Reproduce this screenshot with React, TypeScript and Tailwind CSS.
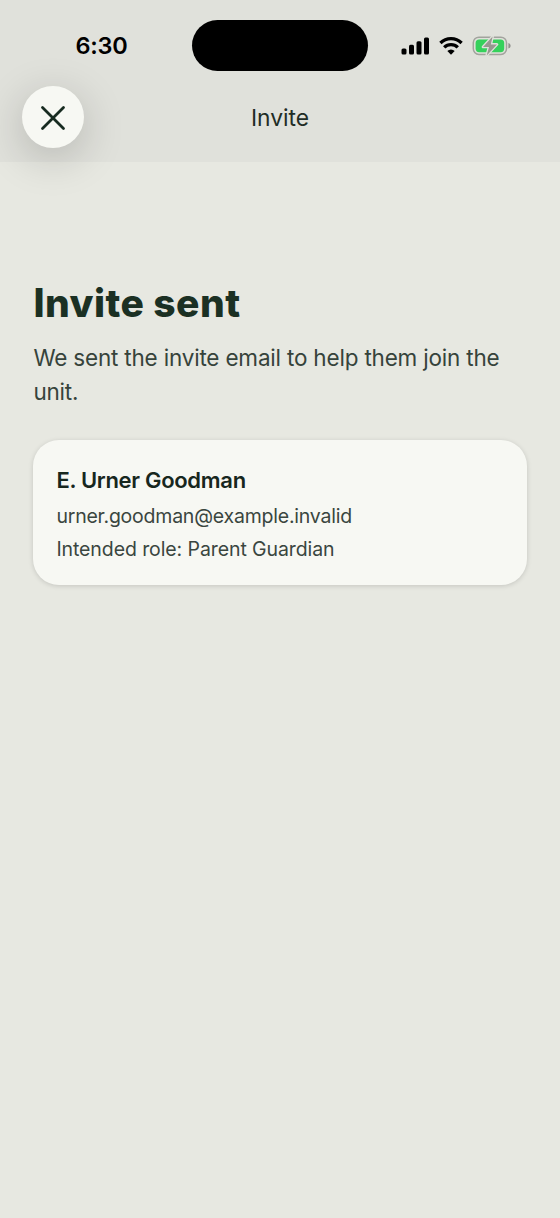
import { X } from "lucide-react";

const invitee = {
  name: "E. Urner Goodman",
  email: "urner.goodman@example.invalid",
  role: "Parent Guardian",
};

function SignalIcon() {
  return (
    <svg width="28" height="18" viewBox="0 0 28 18" fill="black" aria-hidden="true">
      <rect x="0.5" y="11.5" width="5" height="6" rx="1.5" />
      <rect x="8" y="7.7" width="5" height="9.8" rx="1.5" />
      <rect x="15.5" y="4.2" width="5" height="13.3" rx="1.5" />
      <rect x="23" y="0.4" width="5" height="17.1" rx="1.5" />
    </svg>
  );
}

function WifiIcon() {
  return (
    <svg width="24" height="18" viewBox="0 0 24 18" fill="none" stroke="black" strokeWidth="3.3" aria-hidden="true">
      <path d="M1.4 6a15.2 15.2 0 0 1 21.2 0" />
      <path d="M5.2 10.4a9.7 9.7 0 0 1 13.6 0" />
      <path d="M12 17.8l-3.7-3.7a5.2 5.2 0 0 1 7.4 0z" fill="black" stroke="none" />
    </svg>
  );
}

function BatteryIcon() {
  return (
    <svg width="39" height="20" viewBox="0 0 39 20" aria-hidden="true">
      <rect x="1.3" y="1.2" width="33.2" height="17.2" rx="5.6" fill="none" stroke="#a2a39d" strokeWidth="1.5" />
      <path d="M36.4 7c1.6.6 2.2 1.6 2.2 2.8s-.6 2.2-2.2 2.8z" fill="#8f908b" />
      <rect x="3.6" y="3.4" width="28.6" height="12.8" rx="3.6" fill="#35d15b" />
      <path
        d="M20.6 0.6L11 11h6l-2.3 8.4L25 8.4h-6.2z"
        fill="#97978f"
        stroke="#e0e1db"
        strokeWidth="2.6"
        strokeLinejoin="round"
        paintOrder="stroke"
      />
    </svg>
  );
}

function StatusBar() {
  return (
    <div className="grid h-[71px] grid-cols-[192px_176px_1fr] pt-5">
      <div className="flex h-[51px] items-center justify-center pl-[11px] text-[23.5px] font-semibold tracking-[-0.3px] text-black">
        6:30
      </div>
      <div className="h-[51px] rounded-full bg-black" />
      <div className="flex h-[51px] items-center pl-[33px]">
        <SignalIcon />
        <div className="ml-2.5">
          <WifiIcon />
        </div>
        <div className="ml-[9px]">
          <BatteryIcon />
        </div>
      </div>
    </div>
  );
}

function Header() {
  return (
    <header className="h-[162px] bg-[#e0e1db]">
      <StatusBar />
      <div className="grid grid-cols-[84px_1fr_84px] items-center pt-[15.4px]">
        <button
          className="ml-[22px] flex size-[61.5px] items-center justify-center rounded-full bg-[#f7f8f3] pt-px text-[#172b20] shadow-[0_10px_44px_rgba(0,0,0,0.2)]"
          aria-label="Close"
        >
          <X size={42} strokeWidth={1.6} />
        </button>
        <h1 className="pt-0.5 text-center text-[22.8px] text-[#1f2d26]">Invite</h1>
      </div>
    </header>
  );
}

function InviteeCard() {
  return (
    <section className="mt-8 h-[145px] rounded-[26px] bg-[#f7f8f3] px-[23px] pt-[23px] whitespace-nowrap shadow-[0_1px_5px_rgba(0,0,0,0.15)]">
      <h3 className="text-[22px] leading-[34px] font-semibold tracking-[-0.3px] text-[#17271e]">{invitee.name}</h3>
      <p className="mt-[3px] text-[19.5px] leading-[33px] tracking-[-0.22px] text-[#3a463f]">{invitee.email}</p>
      <p className="text-[19.5px] leading-[33px] tracking-[-0.09px] text-[#3a463f]">Intended role: {invitee.role}</p>
    </section>
  );
}

export default function App() {
  return (
    <div className="min-h-[1218px] w-[560px] bg-[#e7e8e1] font-['Inter',sans-serif]">
      <Header />
      <main className="px-[33.4px] pt-[117px]">
        <h2 className="text-[39px] leading-[48px] font-extrabold tracking-[0.45px] text-[#1b3023]">Invite sent</h2>
        <p className="mt-[14px] text-[22.5px] leading-[33.6px] tracking-[-0.19px] whitespace-nowrap text-[#36433b]">
          We sent the invite email to help them join the
          <br />
          unit.
        </p>
        <InviteeCard />
      </main>
    </div>
  );
}
